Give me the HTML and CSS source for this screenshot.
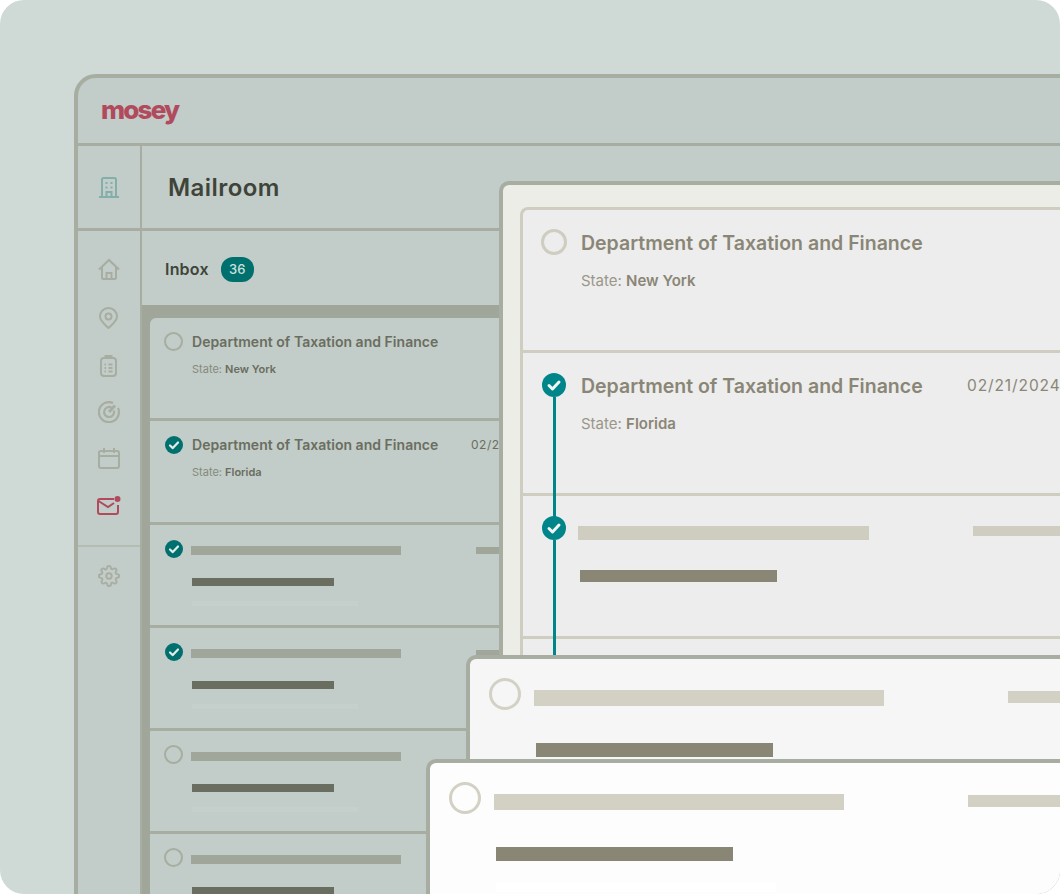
FILE: index.html
```html
<!DOCTYPE html>
<html lang="en">
<head>
    <meta charset="UTF-8">
    <title>Mosey Mailroom</title>
    <link rel="stylesheet" href="styles.css">
</head>
<body>
    <div class="stage">
        <div class="app">
            <header class="topbar"><span class="logo">mosey</span></header>
            <div class="app-body">
                <nav class="rail">
                    <div class="rail-org">
                        <svg width="22" height="21" viewBox="0 0 22 21" fill="none" stroke="#84aeaa" stroke-width="2"><path d="M4 20V2.500a1.500 1.500 0 0 1 1.500-1.500h11A1.500 1.500 0 0 1 18 2.500V20M1 20h20M8.500 20v-5h5v5"/><path d="M7.500 6h2M12.500 6h2M7.500 10.500h2M12.500 10.500h2"/></svg>
                    </div>
                    <div class="rail-links">
                        <svg width="22" height="22" viewBox="0 0 22 22" fill="none" stroke="#a7ada0" stroke-width="2"><path d="M1 11.500L11 2l10 9.500M4 9v10.500A1.500 1.500 0 0 0 5.500 21h11a1.500 1.500 0 0 0 1.500-1.500V9M8.500 21v-6h5v6"/></svg>
                        <svg width="19" height="22" viewBox="0 0 19 22" fill="none" stroke="#a7ada0" stroke-width="2"><path d="M9.500 21C6 17.500 1 14 1 9.500a8.500 8.500 0 0 1 17 0C18 14 13 17.500 9.500 21z"/><circle cx="9.500" cy="9.500" r="3"/></svg>
                        <svg width="17" height="22" viewBox="0 0 17 22" fill="none" stroke="#a7ada0" stroke-width="2"><rect x="1" y="3" width="15" height="18" rx="3"/><path d="M5.500 3.500V1h6v2.500M4.500 9.500h1.500M8.500 9.500h4M4.500 13h1.500M8.500 13h4M4.500 16.500h1.500M8.500 16.500h4"/></svg>
                        <svg width="22" height="22" viewBox="0 0 22 22" fill="none" stroke="#a7ada0" stroke-width="2.200"><path d="M15 2a10 10 0 1 0 5 5"/><path d="M13.500 6.600a5 5 0 1 0 2.400 2.900"/><path d="M11 11l6-6.500" stroke-width="3"/></svg>
                        <svg width="22" height="21" viewBox="0 0 22 21" fill="none" stroke="#a7ada0" stroke-width="2"><rect x="1" y="3" width="20" height="17" rx="2"/><path d="M1 8h20M6 0v5M16 0v5"/></svg>
                        <svg width="24" height="20" viewBox="0 0 24 20" fill="none" stroke="#b04a5c" stroke-width="2"><path d="M17 3H3a2 2 0 0 0-2 2v11a2 2 0 0 0 2 2h16a2 2 0 0 0 2-2V9"/><path d="M1.500 5l9.500 6 6-4"/><circle cx="20.500" cy="3" r="3" fill="#b04a5c" stroke="none"/></svg>
                    </div>
                    <div class="rail-foot">
                        <svg width="22" height="22" viewBox="0 0 24 24" fill="none" stroke="#a7ada0" stroke-width="2"><circle cx="12" cy="12" r="3"/><path d="M19.400 15a1.650 1.650 0 0 0 .33 1.820l.06.06a2 2 0 1 1-2.830 2.830l-.06-.06a1.650 1.650 0 0 0-2.800 1.170V21a2 2 0 0 1-4 0v-.09a1.650 1.650 0 0 0-2.820-1.200l-.06.06a2 2 0 1 1-2.830-2.830l.06-.06a1.650 1.650 0 0 0-1.170-2.800H3a2 2 0 0 1 0-4h.09a1.650 1.650 0 0 0 1.200-2.820l-.06-.06a2 2 0 1 1 2.830-2.830l.06.06a1.650 1.650 0 0 0 2.800-1.170V3a2 2 0 0 1 4 0v.09a1.650 1.650 0 0 0 2.820 1.200l.06-.06a2 2 0 1 1 2.830 2.830l-.06.06a1.650 1.650 0 0 0 1.170 2.800H21a2 2 0 0 1 0 4h-.09a1.650 1.650 0 0 0-1.510 1.080z"/></svg>
                    </div>
                </nav>
                <main class="content">
                    <div class="page-title">Mailroom</div>
                    <div class="tabs"><span class="tab">Inbox</span><span class="count">36</span></div>
                    <div class="list-well">
                        <div class="list">
                            <div class="row">
                                <span class="ring"></span>
                                <div class="row-main">
                                    <div class="row-title">Department of Taxation and Finance</div>
                                    <div class="row-sub">State: <b>New York</b></div>
                                </div>
                            </div>
                            <div class="row">
                                <span class="tick"><svg viewBox="0 0 18 18"><path d="M5 9.500l2.800 2.600L13 6.500"/></svg></span>
                                <div class="row-main">
                                    <div class="row-title">Department of Taxation and Finance</div>
                                    <div class="row-sub">State: <b>Florida</b></div>
                                </div>
                                <span class="row-date">02/21/2024</span>
                            </div>
                            <div class="row">
                                <span class="tick"><svg viewBox="0 0 18 18"><path d="M5 9.500l2.800 2.600L13 6.500"/></svg></span>
                                <div class="row-main">
                                    <div class="bar-title"></div>
                                    <div class="bar-sub"></div>
                                    <div class="bar-faint"></div>
                                </div>
                                <span class="bar-date"></span>
                            </div>
                            <div class="row">
                                <span class="tick"><svg viewBox="0 0 18 18"><path d="M5 9.500l2.800 2.600L13 6.500"/></svg></span>
                                <div class="row-main">
                                    <div class="bar-title"></div>
                                    <div class="bar-sub"></div>
                                    <div class="bar-faint"></div>
                                </div>
                                <span class="bar-date"></span>
                            </div>
                            <div class="row">
                                <span class="ring"></span>
                                <div class="row-main">
                                    <div class="bar-title"></div>
                                    <div class="bar-sub"></div>
                                    <div class="bar-faint"></div>
                                </div>
                                <span class="bar-date"></span>
                            </div>
                            <div class="row">
                                <span class="ring"></span>
                                <div class="row-main">
                                    <div class="bar-title"></div>
                                    <div class="bar-sub"></div>
                                    <div class="bar-faint"></div>
                                </div>
                                <span class="bar-date"></span>
                            </div>
                        </div>
                    </div>
                </main>
            </div>
        </div>

        <div class="zoom-panel">
            <div class="zoom-list">
                <div class="zoom-row">
                    <span class="zoom-ring"></span>
                    <div class="zoom-main">
                        <div class="zoom-title">Department of Taxation and Finance</div>
                        <div class="zoom-sub">State: <b>New York</b></div>
                    </div>
                </div>
                <div class="zoom-row">
                    <span class="zoom-tick"><svg viewBox="0 0 24 24"><path d="M7 12.500l3.500 3.500L17 9"/></svg></span>
                    <div class="zoom-main">
                        <div class="zoom-title">Department of Taxation and Finance</div>
                        <div class="zoom-sub">State: <b>Florida</b></div>
                    </div>
                    <span class="zoom-date">02/21/2024</span>
                </div>
                <div class="zoom-row">
                    <span class="zoom-tick"><svg viewBox="0 0 24 24"><path d="M7 12.500l3.500 3.500L17 9"/></svg></span>
                    <div class="zoom-main">
                        <div class="zoom-bar-title"></div>
                        <div class="zoom-bar-sub"></div>
                    </div>
                    <span class="zoom-bar-date"></span>
                </div>
                <div class="zoom-row"></div>
            </div>
        </div>

        <div class="card card-back">
            <span class="card-ring"></span>
            <div class="card-main">
                <div class="card-title"></div>
                <div class="card-sub"></div>
            </div>
            <span class="card-date"></span>
        </div>
        <div class="card card-front">
            <span class="card-ring"></span>
            <div class="card-main">
                <div class="card-title"></div>
                <div class="card-sub"></div>
                <div class="card-faint"></div>
            </div>
            <span class="card-date"></span>
        </div>
    </div>
</body>
</html>
```

FILE: styles.css
```css
* {
    box-sizing: border-box;
}

html, body {
    margin: 0;
    padding: 0;
    background-color: #ffffff;
}

body {
    width: 1061px;
    height: 895px;
    overflow: hidden;
    font-family: "Inter", "Liberation Sans", sans-serif;
}

.stage {
    position: relative;
    width: 1060px;
    height: 894px;
    padding: 74px 0 0 74px;
    overflow: hidden;
    background-color: #cfd9d5;
    border-radius: 24px;
}

/* main app window */
.app {
    width: 1100px;
    height: 900px;
    background-color: #c2ccc8;
    border: 4px solid #a7ada0;
    border-radius: 22px 0 0 0;
}

.topbar {
    height: 68px;
    padding: 18px 0 0 23px;
    border-bottom: 3px solid #a7ada0;
}

.logo {
    display: block;
    font-size: 26px;
    font-weight: 800;
    line-height: 28px;
    letter-spacing: -1.8px;
    color: #b04a5c;
}

.app-body {
    display: flex;
    height: 820px;
}

.rail {
    width: 64px;
    flex-shrink: 0;
    border-right: 2px solid #a7ada0;
}

.rail-org {
    height: 85px;
    display: flex;
    align-items: center;
    justify-content: center;
    padding-right: 1px;
    border-bottom: 3px solid #a7ada0;
}

.rail-links {
    display: grid;
    grid-template-rows: 48px 50px 46px 46px 46px 50px;
    justify-items: center;
    align-items: center;
    padding: 14px 1px 14px 0;
}

.rail-foot {
    display: flex;
    justify-content: center;
    padding: 18px 1px 0 0;
    border-top: 2px solid #b5bdb3;
}

.content {
    flex: 1;
}

.page-title {
    height: 85px;
    padding: 26px 0 0 26px;
    font-size: 24px;
    font-weight: 600;
    line-height: 32px;
    letter-spacing: 0.45px;
    color: #3f443a;
    border-bottom: 3px solid #a7ada0;
}

.tabs {
    height: 74px;
    display: flex;
    align-items: center;
    gap: 12px;
    padding: 2px 0 0 23px;
}

.tab {
    font-size: 16px;
    font-weight: 600;
    letter-spacing: 0.2px;
    color: #3f443a;
}

.count {
    width: 33px;
    height: 25px;
    border-radius: 12px;
    background-color: #00706f;
    color: #cfe0dc;
    font-size: 13px;
    font-weight: 500;
    line-height: 25px;
    text-align: center;
}

.list-well {
    height: 600px;
    padding: 13px 0 0 8px;
    background-color: #a1a69a;
}

.list {
    height: 100%;
    background-color: #c2ccc8;
    border-radius: 6px 0 0 0;
}

.row {
    display: flex;
    height: 103.3px;
    padding: 14px 0 0 14px;
    border-bottom: 3px solid #a7ada0;
}

.ring {
    flex-shrink: 0;
    width: 19px;
    height: 19px;
    border: 2px solid #a7ada0;
    border-radius: 50%;
}

.tick {
    flex-shrink: 0;
    width: 18px;
    height: 18px;
    margin: 1px 0 0 1px;
    border-radius: 50%;
    background-color: #00706f;
}

.tick svg {
    display: block;
    fill: none;
    stroke: #e3ebe8;
    stroke-width: 2.2;
    stroke-linecap: round;
    stroke-linejoin: round;
}

.row-main {
    width: 280px;
    margin-left: 9px;
}

.row-title {
    font-size: 14px;
    font-weight: 600;
    line-height: 20px;
    letter-spacing: 0.03px;
    color: #6a6e60;
    white-space: nowrap;
}

.row-sub {
    margin-top: 9px;
    font-size: 11px;
    line-height: 16px;
    color: #858a7d;
}

.row-sub b {
    font-weight: 600;
    color: #6a6e60;
}

.row-date {
    margin-left: -1px;
    font-size: 12px;
    line-height: 20px;
    letter-spacing: 0.5px;
    color: #6a6e60;
}

.bar-title {
    width: 210px;
    height: 9px;
    margin: 7px 0 0 -1px;
    background-color: #a1a69a;
}

.bar-sub {
    width: 142px;
    height: 8px;
    margin: 23px 0 0 0;
    background-color: #6a6e60;
}

.bar-faint {
    width: 166px;
    height: 5px;
    margin-top: 15px;
    background-color: #c5cfcb;
}

.bar-date {
    width: 40px;
    height: 7px;
    margin: 8px 0 0 4px;
    background-color: #a1a69a;
}

/* enlarged panel over the list */
.zoom-panel {
    position: absolute;
    left: 499px;
    top: 181px;
    width: 600px;
    height: 600px;
    padding: 22px 0 0 17px;
    background-color: #ecede7;
    border: 4px solid #a7ada0;
    border-radius: 10px 0 0 0;
}

.zoom-list {
    background-color: #ededed;
    border-top: 3px solid #cfcdc0;
    border-left: 3px solid #cfcdc0;
    border-radius: 8px 0 0 0;
}

.zoom-row {
    position: relative;
    display: flex;
    height: 143px;
    padding: 19px 0 0 18px;
    border-bottom: 3px solid #cfcdc0;
}

.zoom-ring {
    flex-shrink: 0;
    width: 26px;
    height: 26px;
    border: 3px solid #cfcdc0;
    border-radius: 50%;
}

.zoom-tick {
    position: relative;
    flex-shrink: 0;
    width: 24px;
    height: 24px;
    margin: 1px 1px 0 1px;
    border-radius: 50%;
    background-color: #00858a;
}

.zoom-tick::after {
    content: "";
    position: absolute;
    left: 11px;
    top: 24px;
    width: 3px;
    height: 130px;
    background-color: #00858a;
}

.zoom-tick svg {
    display: block;
    fill: none;
    stroke: #f3f5f2;
    stroke-width: 3;
    stroke-linecap: round;
    stroke-linejoin: round;
}

.zoom-main {
    width: 386px;
    margin-left: 14px;
}

.zoom-title {
    margin-top: 1px;
    font-size: 19.5px;
    font-weight: 600;
    line-height: 26px;
    color: #8a8676;
    white-space: nowrap;
}

.zoom-sub {
    margin-top: 14px;
    font-size: 15px;
    line-height: 22px;
    color: #9a978a;
}

.zoom-sub b {
    font-weight: 600;
    color: #8a8676;
}

.zoom-date {
    margin-top: 1px;
    font-size: 15.5px;
    line-height: 26px;
    letter-spacing: 0.9px;
    color: #8a8676;
}

.zoom-bar-title {
    width: 291px;
    height: 14px;
    margin: 11px 0 0 -3px;
    background-color: #cfcdc0;
}

.zoom-bar-sub {
    width: 197px;
    height: 12px;
    margin: 30px 0 0 -1px;
    background-color: #8a8676;
}

.zoom-bar-date {
    width: 100px;
    height: 10px;
    margin: 11px 0 0 6px;
    background-color: #cfcdc0;
}

/* stacked cards at the bottom right */
.card {
    position: absolute;
    display: flex;
    width: 700px;
    height: 300px;
    padding: 19px 0 0 19px;
    border: 4px solid #a7ada0;
    border-radius: 10px 0 0 0;
}

.card-back {
    left: 466px;
    top: 655px;
    background-color: #f6f6f6;
}

.card-front {
    left: 426px;
    top: 759px;
    background-color: #fdfdfd;
}

.card-ring {
    flex-shrink: 0;
    width: 32px;
    height: 32px;
    border: 3px solid #d3d1c4;
    border-radius: 50%;
}

.card-main {
    width: 442px;
    margin-left: 13px;
}

.card-title {
    width: 350px;
    height: 16px;
    margin-top: 12px;
    background-color: #d3d1c4;
}

.card-sub {
    width: 237px;
    height: 14px;
    margin: 37px 0 0 2px;
    background-color: #8a8676;
}

.card-faint {
    width: 280px;
    height: 9px;
    margin: 22px 0 0 2px;
    background-color: #ffffff;
}

.card-date {
    width: 120px;
    height: 12px;
    margin: 13px 0 0 32px;
    background-color: #d3d1c4;
}
```
